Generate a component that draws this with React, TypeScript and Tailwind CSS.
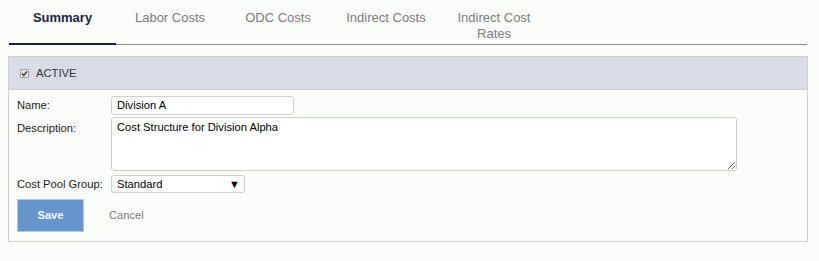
import React from "react";

const tabs = [
  { t: "Summary", w: "w-[107px]" },
  { t: "Labor Costs", w: "w-[108px]" },
  { t: "ODC Costs", w: "w-[108px]" },
  { t: "Indirect Costs", w: "w-[108px]" },
  { t: "Indirect Cost Rates", w: "w-[108px]" },
];

export default function App() {
  return (
    <div
      className="w-[819px] h-[261px] bg-[#fbfdfb] overflow-hidden"
      style={{ fontFamily: '"Liberation Sans", Arial, sans-serif' }}
    >
      <div className="ml-[8px] w-[800px]">
        {/* Tabs */}
        <div className="flex h-[45px] border-b border-[#8a8a8a] ml-px mr-px">
          {tabs.map((tab, i) => (
            <div
              key={tab.t}
              className={
                tab.w +
                " pt-[10px] text-center text-[13px] leading-[16px] px-[12px] " +
                (i === 0
                  ? "font-bold text-[#1b2140] border-b-2 border-[#1b2140] -mb-px"
                  : "text-[#7b7b7b]")
              }
            >
              {tab.t}
            </div>
          ))}
        </div>

        {/* Panel */}
        <div className="mt-[11px] border border-[#cfcfcf]">
          <div className="h-[33px] bg-[#dadbe8] border-b border-[#cfcfcf] flex items-center pl-[11px] text-[11.2px] text-[#333]">
            <span className="w-[9px] h-[9px] border border-[#a0a0a0] bg-[#e2e2e2] rounded-[1px] flex items-center justify-center mr-[7px]">
              <svg width="7" height="7" viewBox="0 0 7 7">
                <path d="M1 3.6 L2.8 5.4 L6 1.4" stroke="#333" strokeWidth="1.4" fill="none" />
              </svg>
            </span>
            <span className="pt-[1px]">ACTIVE</span>
          </div>

          <div className="pl-[8px] pt-[6px] pb-[9px] text-[11.2px] text-[#222]">
            <div className="flex items-center h-[19px]">
              <div className="w-[94px]">Name:</div>
              <div className="w-[183px] h-[19px] border border-[#cfcfcf] rounded-[3px] bg-white pl-[5px] flex items-center text-black">
                Division A
              </div>
            </div>
            <div className="flex mt-[2px]">
              <div className="w-[94px] pt-[3px]">Description:</div>
              <textarea
                readOnly
                defaultValue="Cost Structure for Division Alpha"
                className="w-[626px] h-[54px] border border-[#cfcfcf] rounded-[3px] bg-white pl-[5px] pt-[2px] text-[11.2px] leading-[14px] text-black outline-none"
                style={{ fontFamily: '"Liberation Sans", Arial, sans-serif' }}
              />
            </div>
            <div className="flex items-center mt-[4px]">
              <div className="w-[94px]">Cost Pool Group:</div>
              <div className="w-[134px] h-[18px] border border-[#cfcfcf] rounded-[3px] bg-white pl-[5px] pr-[4px] flex items-center justify-between text-black">
                <span>Standard</span>
                <span className="text-[11px]">▼</span>
              </div>
            </div>
            <div className="flex items-center mt-[6px]">
              <div className="w-[67px] h-[33px] bg-[#6694cc] border border-[#b9c6d6] text-white font-bold flex items-center justify-center">
                Save
              </div>
              <div className="ml-[25px] text-[#7b7b7b]">Cancel</div>
            </div>
          </div>
        </div>
      </div>
    </div>
  );
}
